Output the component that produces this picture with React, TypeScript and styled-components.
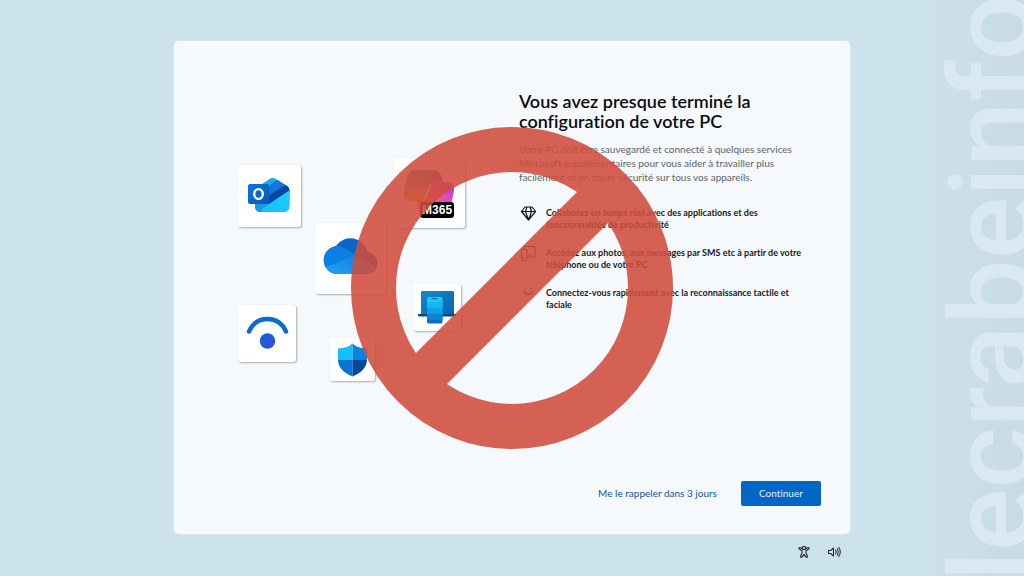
import React from "react";
import styled, { createGlobalStyle } from "styled-components";

const GlobalStyle = createGlobalStyle`
  * { box-sizing: border-box; }
  body { margin: 0; background: #cce3eb; font-variant-ligatures: none; }
`;

const Page = styled.div`
  position: relative;
  min-height: 100vh;
  display: grid;
  grid-template-columns: 1fr min(66%, 1000px) 1fr;
  grid-template-rows: 41px 1fr 42px;
  overflow: hidden;
  background: linear-gradient(to left, #c9dbe5 0, #cadee7 48px, #cce3eb 112px);
  font-family: Lato, "Open Sans", sans-serif;
`;

const Watermark = styled.div`
  position: absolute;
  right: -28px;
  bottom: -5px;
  writing-mode: vertical-rl;
  transform: rotate(180deg);
  font: 500 117px/117px Roboto, sans-serif;
  white-space: nowrap;
  color: #d9e8f1;
  user-select: none;
`;

const Card = styled.main`
  position: relative;
  grid-column: 2;
  grid-row: 2;
  display: grid;
  grid-template-columns: minmax(0, 1fr) 302px;
  grid-template-rows: 1fr auto;
  padding: 50px 29px 28px 0;
  border-radius: 5px;
  background: #f5f9fc;
  box-shadow: 0 0 2px rgba(255, 255, 255, 0.7);
`;

const Illustration = styled.div`
  position: relative;
`;

const Tile = styled.div<{ $x: number; $y: number; $w: number; $h: number }>`
  position: absolute;
  left: ${(p) => p.$x}px;
  top: ${(p) => p.$y}px;
  width: ${(p) => p.$w}px;
  height: ${(p) => p.$h}px;
  border-radius: 3px;
  background: #fff;
  box-shadow: 1px 1px 2px rgba(60, 60, 60, 0.4);

  svg { display: block; width: 100%; height: 100%; }
`;

const ProductTag = styled.span`
  position: absolute;
  right: 11px;
  bottom: 10px;
  width: 34px;
  border-radius: 3px;
  background: #000;
  color: #fff;
  font: 700 12px/16px "Liberation Sans", Arial, sans-serif;
  text-align: center;
`;

const Content = styled.section`
  display: flex;
  flex-direction: column;
`;

const Title = styled.h1`
  margin: 0 0 11px;
  font-size: 18px;
  line-height: 20px;
  font-weight: 600;
  color: #0b0b0d;
  white-space: nowrap;
`;

const Lead = styled.p`
  margin: 0 0 23px;
  font-size: 10px;
  line-height: 14px;
  color: #606266;
  white-space: nowrap;
`;

const Features = styled.ul`
  display: flex;
  flex-direction: column;
  gap: 16px;
  margin: 0;
  padding: 0;
  list-style: none;
`;

const Feature = styled.li`
  display: flex;
  gap: 9px;
  font-size: 9px;
  line-height: 12px;
  font-weight: 700;
  color: #18191b;
  white-space: nowrap;

  svg { flex: none; width: 18px; height: 18px; margin-top: -2px; }
`;

const Actions = styled.div`
  grid-column: 1 / -1;
  display: flex;
  justify-content: flex-end;
  align-items: center;
  gap: 24px;
`;

const ActionButton = styled.button<{ $primary?: boolean }>`
  height: 25px;
  min-width: ${(p) => (p.$primary ? "80px" : "0")};
  padding: 0;
  border: 0;
  border-radius: 2px;
  background: ${(p) => (p.$primary ? "#0067c8" : "transparent")};
  color: ${(p) => (p.$primary ? "#e8f3fd" : "#1454a0")};
  font: 400 10px/25px Lato, sans-serif;
  font-variant-ligatures: none;
  cursor: pointer;
`;

const Prohibited = styled.svg`
  position: absolute;
  top: 50%;
  left: 50%;
  width: 322px;
  height: 322px;
  transform: translate(-50%, -50%);
  pointer-events: none;
`;

const Tray = styled.footer`
  position: relative;
  grid-column: 2;
  grid-row: 3;
  display: flex;
  justify-content: flex-end;
  align-items: center;
  gap: 14px;
  padding: 0 8px 6px 0;
`;

const TrayButton = styled.button`
  width: 16px;
  height: 16px;
  padding: 0;
  border: 0;
  background: none;
  cursor: pointer;

  svg { display: block; width: 16px; height: 16px; }
`;

const Outlook = () => (
  <svg viewBox="0 0 63 62" aria-hidden="true">
    <defs>
      <clipPath id="envelope">
        <path d="M17 26L24 19L31.500 14Q34.500 12 38 14L49 21Q51.500 22.500 51.500 26V41Q51 47 45 47H23Q17 47 17 41Z" />
      </clipPath>
      <linearGradient id="env-cyan" x1="1" y1="0" x2="0" y2="1">
        <stop offset="0" stopColor="#1ed0fb" /><stop offset="1" stopColor="#12c0f6" />
      </linearGradient>
      <linearGradient id="env-square" x1="0" y1="0" x2="1" y2="1">
        <stop offset="0" stopColor="#0f74dc" /><stop offset="1" stopColor="#0358b8" />
      </linearGradient>
    </defs>
    <g clipPath="url(#envelope)">
      <rect x="17" y="11" width="35" height="37" fill="#22a8ea" />
      <path d="M28 23L40 14L52 18V28L31 42H24Z" fill="#1376df" />
      <path d="M30 31L47 20L52 21V27L31 41Z" fill="#0a47a5" />
      <path d="M17 30L30 39L40 48H17Z" fill="#149be2" />
      <path d="M52 25L25 43Q22 47 27 48H52Z" fill="url(#env-cyan)" />
    </g>
    <rect x="10" y="19" width="21" height="20" rx="2" fill="url(#env-square)" />
    <ellipse cx="20.500" cy="29" rx="4.300" ry="4.900" fill="none" stroke="#fff" strokeWidth="2.400" />
  </svg>
);

const Cloud = () => (
  <svg viewBox="0 0 71 71" aria-hidden="true">
    <defs>
      <clipPath id="cloud">
        <path d="M22 51A14 14 0 0 1 20.500 23.200A18 18 0 0 1 53 29.500A11 11 0 0 1 54 51Z" />
      </clipPath>
      <linearGradient id="cloud-front" x1="0" y1="1" x2="1" y2="0">
        <stop offset="0" stopColor="#23a4f6" /><stop offset="1" stopColor="#0b75dc" />
      </linearGradient>
    </defs>
    <g clipPath="url(#cloud)">
      <rect x="6" y="12" width="62" height="40" fill="#0768ca" />
      <path d="M6 22H20Q30 24 41 33L11 45L6 50Z" fill="#0b80e0" />
      <path d="M8 45.500L40 32Q48 26 68 32V52H8Z" fill="url(#cloud-front)" />
      <path d="M40 32L68 48V28H50Z" fill="#0753ad" />
    </g>
  </svg>
);

const Copilot = () => (
  <svg viewBox="0 0 71 70" aria-hidden="true">
    <defs>
      <linearGradient id="cop-left" x1="0" y1="0" x2="0" y2="1">
        <stop offset="0" stopColor="#2a86b8" /><stop offset="0.500" stopColor="#6f9c64" /><stop offset="1" stopColor="#e9b516" />
      </linearGradient>
      <linearGradient id="cop-right" x1="1" y1="0" x2="0" y2="1">
        <stop offset="0" stopColor="#8b3cf0" /><stop offset="0.350" stopColor="#e14cc0" /><stop offset="0.700" stopColor="#ff5878" /><stop offset="1" stopColor="#ff9a4c" />
      </linearGradient>
    </defs>
    <path d="M21 12H39Q45 12 47 18L49 24H42Q36 24 34 30L30 43H17Q9 43 10 34L13 20Q15 12 21 12Z" fill="url(#cop-left)" />
    <path d="M38 12H39Q45 12 47 18L49 24H42Q39 24 37 27Z" fill="#3a6aa8" />
    <path d="M42 24H53Q61 24 60 33L57 47Q55 56 48 56H31Q25 56 24 49L23 43H29Q32 43 34 36L37 28Q39 24 42 24Z" fill="url(#cop-right)" />
  </svg>
);

const PhoneLink = () => (
  <svg viewBox="0 0 48 47" aria-hidden="true">
    <defs>
      <linearGradient id="laptop" x1="0" y1="0" x2="1" y2="1">
        <stop offset="0" stopColor="#1687cd" /><stop offset="1" stopColor="#0863b2" />
      </linearGradient>
    </defs>
    <rect x="8" y="7" width="33" height="24" rx="1" fill="url(#laptop)" />
    <path d="M5 30H43V31Q43 32.500 41 32.500H7Q5 32.500 5 31Z" fill="#064a86" />
    <rect x="14" y="13" width="15.500" height="26.500" rx="1.500" fill="#0a6fc4" />
    <path d="M14 14.500Q14 13 15.500 13H28Q29.500 13 29.500 14.500V24H14Z" fill="#1fc8f6" />
    <path d="M14 19L29.500 17V25H14Z" fill="#17b5ef" />
    <rect x="14" y="24" width="15.500" height="6" fill="#0da0e6" />
    <rect x="14" y="30" width="15.500" height="6" fill="#0b82d4" />
    <path d="M19 14.700H24" stroke="#075590" strokeWidth="1" strokeLinecap="round" />
  </svg>
);

const Presence = () => (
  <svg viewBox="0 0 58 57" aria-hidden="true">
    <defs>
      <linearGradient id="dot" x1="0" y1="0" x2="1" y2="1">
        <stop offset="0" stopColor="#1260dc" /><stop offset="1" stopColor="#3450d4" />
      </linearGradient>
    </defs>
    <path d="M11 26.500C15 17.500 22 14 29.500 14S44 17.500 48 26.500" fill="none" stroke="#0a6cd2" strokeWidth="4.400" strokeLinecap="round" />
    <circle cx="29.500" cy="36" r="7.700" fill="url(#dot)" />
  </svg>
);

const Defender = () => (
  <svg viewBox="0 0 45 43" aria-hidden="true">
    <defs>
      <clipPath id="shield">
        <path d="M22.500 5.500C27 9.500 31 10 37 10.500V21C37 30 31 35 22.500 38.500C14 35 8 30 8 21V10.500C14 10 18 9.500 22.500 5.500Z" />
      </clipPath>
    </defs>
    <g clipPath="url(#shield)">
      <path d="M7 5H22.500V22H7Z" fill="#12c1f8" />
      <path d="M22.500 5H38V22H22.500Z" fill="#0a84dc" />
      <path d="M7 22H22.500V39H7Z" fill="#0874d2" />
      <path d="M22.500 22H38V39H22.500Z" fill="#064a98" />
    </g>
  </svg>
);

const line = { fill: "none", stroke: "#141517", strokeLinecap: "round", strokeLinejoin: "round" } as const;

const Diamond = () => (
  <svg viewBox="0 0 18 18" {...line} strokeWidth="1.200" aria-hidden="true">
    <path d="M6 2H13L16.500 6.500L9.500 15L2.500 6.500ZM2.500 6.500H16.500M8 2L6.500 6.500L9.500 15L12.500 6.500L11 2" />
  </svg>
);

const Devices = () => (
  <svg viewBox="0 0 18 18" {...line} strokeWidth="1" aria-hidden="true">
    <path d="M5 4V1.500H16V12H9.500M9.500 9.500H11.500V12" />
    <rect x="2.500" y="4.500" width="5.500" height="11" rx="1" />
    <path d="M4.500 13.500H6" />
  </svg>
);

const Smile = () => (
  <svg viewBox="0 0 18 18" {...line} strokeWidth="1.500" aria-hidden="true">
    <path d="M6.500 3V3.500M12.500 3V3.500M5 7Q9.500 11.500 14 7" />
  </svg>
);

const features = [
  { icon: <Diamond />, lines: ["Collaborez en temps réel avec des applications et des", "fonctionnalités de productivité"] },
  { icon: <Devices />, lines: ["Accédez aux photos, aux messages par SMS etc à partir de votre", "téléphone ou de votre PC"] },
  { icon: <Smile />, lines: ["Connectez-vous rapidement avec la reconnaissance tactile et", "faciale"] },
];

export default function App() {
  return (
    <>
      <GlobalStyle />
      <Page>
        <Watermark aria-hidden="true">lecrabeinfo</Watermark>
        <Card>
          <Illustration>
            <Tile $x={64} $y={74} $w={63} $h={62}><Outlook /></Tile>
            <Tile $x={141} $y={132} $w={71} $h={71}><Cloud /></Tile>
            <Tile $x={220} $y={67} $w={71} $h={70}>
              <Copilot />
              <ProductTag>M365</ProductTag>
            </Tile>
            <Tile $x={239} $y={193} $w={48} $h={47}><PhoneLink /></Tile>
            <Tile $x={64} $y={214} $w={58} $h={57}><Presence /></Tile>
            <Tile $x={156} $y={247} $w={45} $h={43}><Defender /></Tile>
          </Illustration>
          <Content>
            <Title>Vous avez presque terminé la<br />configuration de votre PC</Title>
            <Lead>
              Votre PC doit être sauvegardé et connecté à quelques services<br />
              Microsoft supplémentaires pour vous aider à travailler plus<br />
              facilement et en toute sécurité sur tous vos appareils.
            </Lead>
            <Features>
              {features.map(({ icon, lines }) => (
                <Feature key={lines[0]}>
                  {icon}
                  <span>{lines[0]}<br />{lines[1]}</span>
                </Feature>
              ))}
            </Features>
          </Content>
          <Actions>
            <ActionButton type="button">Me le rappeler dans 3 jours</ActionButton>
            <ActionButton type="button" $primary>Continuer</ActionButton>
          </Actions>
          <Prohibited viewBox="-161 -161 322 322" aria-hidden="true">
            <g opacity="0.880">
              <circle r="138.500" fill="none" stroke="#d04d3d" strokeWidth="45" />
              <path d="M-90 90L90 -90" stroke="#d04d3d" strokeWidth="44" />
            </g>
          </Prohibited>
        </Card>
        <Tray>
          <TrayButton type="button" aria-label="Accessibilité">
            <svg viewBox="0 0 16 16" {...line} stroke="#2b3236" strokeWidth="1.200">
              <circle cx="8" cy="4" r="1.700" />
              <path d="M6.300 4.800L4 3.600Q3 3.500 3 4.500L3.500 5.300L6 6.800V9L4.500 12.500Q4.600 13.700 5.800 13.300L8 10.300L10.200 13.300Q11.400 13.700 11.500 12.500L10 9V6.800L12.500 5.300L13 4.500Q13 3.500 12 3.600L9.700 4.800" />
            </svg>
          </TrayButton>
          <TrayButton type="button" aria-label="Volume">
            <svg viewBox="0 0 16 16" {...line} stroke="#2b3236" strokeWidth="1.100">
              <path d="M2.500 6.500V9.500H4.700L7.500 12V4L4.700 6.500ZM9.500 6.300Q10.700 8 9.500 9.700M11.200 4.800Q13.300 8 11.200 11.200M12.800 3.500Q15.800 8 12.800 12.500" />
            </svg>
          </TrayButton>
        </Tray>
      </Page>
    </>
  );
}
